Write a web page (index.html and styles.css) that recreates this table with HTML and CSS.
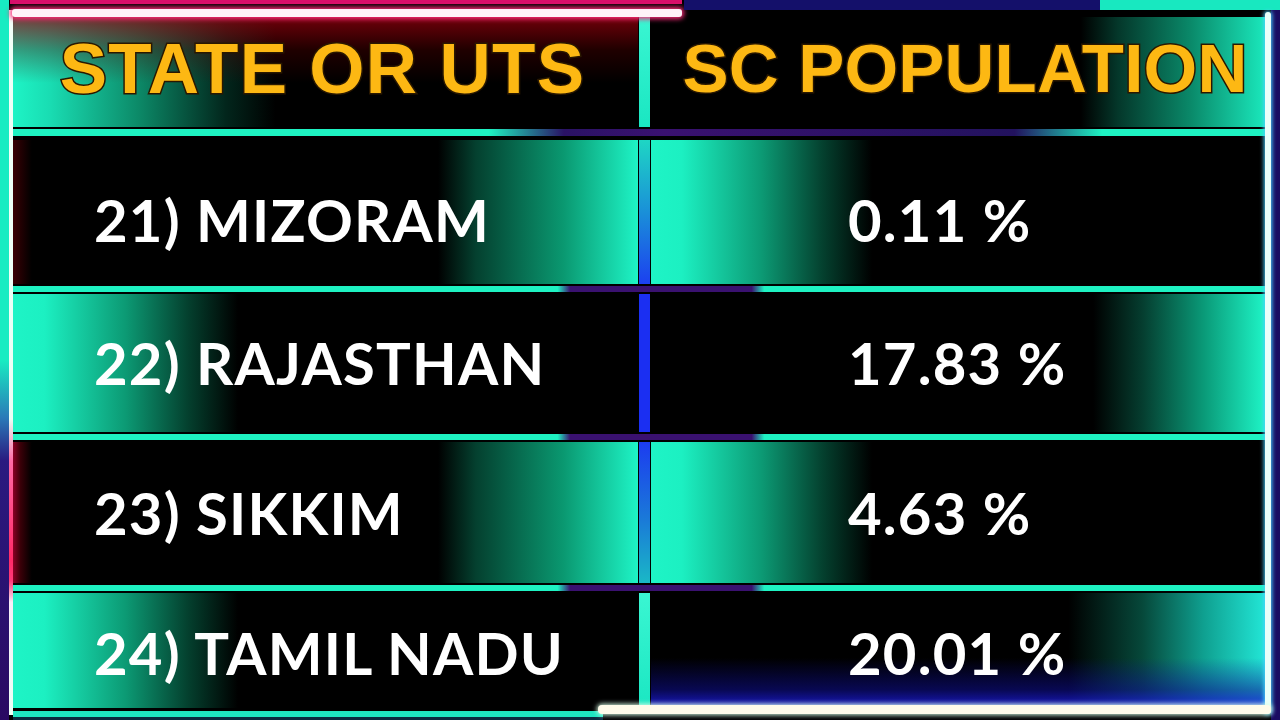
FILE: index.html
```html
<!DOCTYPE html>
<html>
<head>
<meta charset="utf-8">
<title>SC Population</title>
<link rel="stylesheet" href="styles.css">
</head>
<body>
<div class="screen">
  <div class="table">
    <div class="row head">
      <div class="cell left head-left"><span class="htext htext-left">STATE OR UTS</span></div>
      <div class="divider d-cyan"></div>
      <div class="cell right head-right"><span class="htext htext-right">SC POPULATION</span></div>
    </div>
    <div class="sep sep-head"></div>
    <div class="row r1">
      <div class="cell left edge-red"><span class="btext">21) MIZORAM</span></div>
      <div class="divider d-cyan-blue"></div>
      <div class="cell right fade-left"><span class="btext">0.11 %</span></div>
    </div>
    <div class="sep"></div>
    <div class="row r2">
      <div class="cell left fade-left"><span class="btext">22) RAJASTHAN</span></div>
      <div class="divider d-blue"></div>
      <div class="cell right fade-right-late"><span class="btext">17.83 %</span></div>
    </div>
    <div class="sep"></div>
    <div class="row r3">
      <div class="cell left edge-pink"><span class="btext">23) SIKKIM</span></div>
      <div class="divider d-blue-cyan"></div>
      <div class="cell right fade-left"><span class="btext">4.63 %</span></div>
    </div>
    <div class="sep"></div>
    <div class="row r4">
      <div class="cell left fade-left"><span class="btext">24) TAMIL NADU</span></div>
      <div class="divider d-cyan"></div>
      <div class="cell right last-right"><span class="btext">20.01 %</span></div>
    </div>
  </div>

  <div class="glow g-left-outer"></div>
  <div class="glow g-left-inner"></div>
  <div class="glow g-top-pink"></div>
  <div class="glow g-top-white"></div>
  <div class="glow g-top-navy"></div>
  <div class="glow g-top-cyan"></div>
  <div class="glow g-right-outer"></div>
  <div class="glow g-right"></div>
  <div class="glow g-bottom-left"></div>
  <div class="glow g-bottom"></div>
</div>
</body>
</html>
```

FILE: styles.css
```css
* { box-sizing: border-box; }

body {
  margin: 0;
  background: #000;
}

.screen {
  position: relative;
  width: 1280px;
  height: 720px;
  overflow: hidden;
  background: #000;
}

.table {
  display: flex;
  flex-direction: column;
  padding: 17px 15px 0 13px;
}

.row {
  display: flex;
}

.head { height: 110px; }
.r1 { height: 144px; }
.r2 { height: 138px; }
.r3 { height: 141px; }
.r4 { height: 118px; }

.cell {
  display: flex;
  align-items: center;
}

.left {
  width: 625px;
  padding-left: 81px;
}

.right {
  flex: 1;
  padding-left: 197px;
}

.head .cell {
  justify-content: center;
  padding-left: 0;
  padding-bottom: 8px;
}

.head .left { padding-right: 6px; }
.head .right { padding-left: 14px; }

.r1 .cell { padding-top: 14px; }
.r2 .cell { padding-bottom: 2px; }

.divider {
  width: 11px;
  margin: 0 1px;
  flex: none;
}

.d-cyan { background: linear-gradient(to bottom, #3af6d2, #1ae6c2); }
.d-cyan-blue { background: linear-gradient(to bottom, #1ed6c4 0%, #1a90d8 50%, #1c40f0 100%); }
.d-blue { background: #1b2ff2; }
.d-blue-cyan { background: linear-gradient(to bottom, #1c3cf0 0%, #1a7ad8 55%, #1ab8c6 100%); }

.sep {
  height: 10px;
  background:
    linear-gradient(to right, transparent 0, transparent 43.5%, #3a1170 44.5%, #3a1170 59%, transparent 60%) 0 2px / 100% 6px no-repeat,
    linear-gradient(to bottom, #000 0, #000 2px, #1ef2c2 2px, #1ef2c2 8px, #000 8px);
}

.sep-head {
  height: 13px;
  background:
    linear-gradient(to right, transparent 0, transparent 38%, #2a1265 44%, #3a1170 52%, #22125e 80%, transparent 87%) 0 2px / 100% 7px no-repeat,
    linear-gradient(to bottom, #000 0, #000 2px, #1ef2c2 2px, #1ef2c2 9px, #000 9px);
}

.head-left {
  background:
    linear-gradient(to bottom, rgba(150, 0, 12, 0.75) 0, rgba(90, 0, 0, 0.35) 30%, rgba(0, 0, 0, 0) 60%),
    linear-gradient(to right, #1ef4c6 0, #19dcb2 6%, #0c8a68 20%, #02261c 34%, #000 42%);
}

.head-right {
  background: linear-gradient(to right, #000 0, #000 70%, #04372a 76%, #0a8a6a 88%, #1ae8bc 100%);
}

.edge-red {
  background:
    linear-gradient(to right, #3a0004 0, rgba(40, 0, 0, 0) 3%),
    linear-gradient(to right, #000 0, #000 68%, #04402f 74%, #0a9870 88%, #1ef4c6 100%);
}

.edge-pink {
  background:
    linear-gradient(to right, #8a0024 0, #3a0008 1.2%, rgba(40, 0, 0, 0) 3%),
    linear-gradient(to right, #000 0, #000 68%, #04402f 74%, #0a9870 88%, #1ef4c6 100%);
}

.fade-left {
  background: linear-gradient(to right, #1ef4c6 0, #1cf0c2 5%, #0c9a74 18%, #04402e 28%, #000 36%);
}

.fade-right-late {
  background: linear-gradient(to right, #000 0, #000 72%, #053d2f 80%, #0a9a78 90%, #1ef4c6 100%);
}

.last-right {
  background:
    linear-gradient(to top, rgba(30, 30, 230, 0.95) 0, rgba(15, 15, 150, 0.55) 18%, rgba(0, 0, 80, 0) 45%),
    linear-gradient(to right, #000 0, #000 68%, #06483a 80%, #0fa090 90%, #22e6d6 100%);
}

.htext {
  font-family: "Liberation Sans", Arial, sans-serif;
  font-weight: 700;
  color: #fdb813;
  -webkit-text-stroke: 3px #2a1800;
  paint-order: stroke fill;
  white-space: nowrap;
}

.htext-left {
  font-size: 71px;
  letter-spacing: 1.3px;
}

.htext-right {
  font-size: 69px;
  letter-spacing: 0.2px;
}

.btext {
  font-family: Lato, "Open Sans", sans-serif;
  font-weight: 700;
  font-size: 58px;
  letter-spacing: 1.2px;
  color: #fff;
  white-space: nowrap;
}

/* neon frame decorations lying over the table */
.glow { position: absolute; }

.g-left-outer {
  left: 0;
  top: 0;
  width: 9px;
  height: 720px;
  background: linear-gradient(to bottom, #18ecc2 0, #18ecc2 50%, #2a7ab8 58%, #2a1a80 64%, #2a0a62 100%);
}

.g-left-inner {
  left: 9px;
  top: 10px;
  width: 4px;
  height: 705px;
  background: linear-gradient(to bottom, #f2fff8 0, #eafff6 58%, #ff6aa6 64%, #ff2a68 78%, #ff3a7a 81%, #f6eef8 84%, #eefff6 100%);
}

.g-top-pink {
  left: 10px;
  top: 0;
  width: 672px;
  height: 4px;
  background: #d80f6a;
}

.g-top-white {
  left: 12px;
  top: 9px;
  width: 670px;
  height: 8px;
  border-radius: 3px;
  background: #fff2f8;
  box-shadow: 0 0 5px 2px #ff2a7a;
}

.g-top-navy {
  left: 684px;
  top: 0;
  width: 416px;
  height: 10px;
  background: #14106a;
}

.g-top-cyan {
  left: 1100px;
  top: 0;
  width: 180px;
  height: 10px;
  background: #18e8c0;
}

.g-right-outer {
  left: 1271px;
  top: 10px;
  width: 9px;
  height: 710px;
  background: #1a0c62;
}

.g-right {
  left: 1265px;
  top: 12px;
  width: 6px;
  height: 702px;
  border-radius: 3px;
  background: #eafffa;
  box-shadow: 0 0 4px 1px #4ad0ff;
}

.g-bottom-left {
  left: 13px;
  top: 708px;
  width: 590px;
  height: 12px;
  background: linear-gradient(to bottom, #000 0, #000 3px, #1ee6c2 3px, #1ee6c2 9px, #0a2a40 9px);
}

.g-bottom {
  left: 598px;
  top: 705px;
  width: 673px;
  height: 9px;
  border-radius: 4px;
  background: #fffbea;
  box-shadow: 0 0 5px 1px #d8ffe8;
}
```
